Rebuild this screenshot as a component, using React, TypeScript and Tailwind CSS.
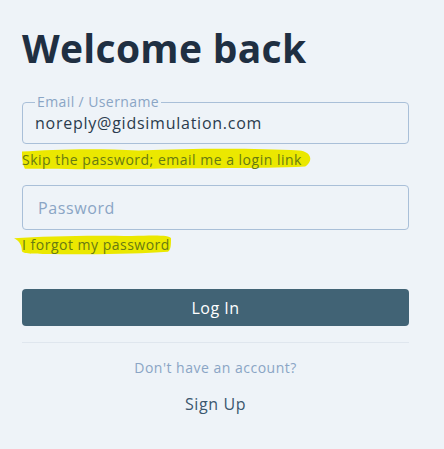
import React from 'react'

const font = { fontFamily: '"Open Sans", "Noto Sans", sans-serif' }

function Marker({ d, className }: { d: string; className: string }) {
  return (
    <svg className={className} viewBox="0 0 100 20" preserveAspectRatio="none" aria-hidden>
      <path d={d} fill="#ebe800" />
    </svg>
  )
}

export default function App() {
  return (
    <div className="min-h-[449px] w-full bg-[#eef3f8]" style={font}>
      <div className="w-[387px] ml-[22px] pt-[24px]">
        <h1 className="text-[39px] font-bold leading-[48px] tracking-[0.3px] text-[#1f2f42]">Welcome back</h1>

        <fieldset className="mt-[22px] h-[50px] rounded-[4px] border border-[#a9bfd8] px-[12px]">
          <legend className="px-[2px] text-[14px] leading-[16px] tracking-[0.4px] text-[#8aa5c5]">Email / Username</legend>
          <div className="mt-[1px] text-[16px] leading-[24px] tracking-[0.75px] text-[#2a3b4d]">noreply@gidsimulation.com</div>
        </fieldset>

        <div className="relative mt-[3px] h-[22px]">
          <Marker
            className="absolute left-0 top-0 h-[23px] w-[292px]"
            d="M0 4 C 10 2, 25 1, 40 3 C 60 1, 80 1, 95 3 C 99 4, 100 12, 97 17 C 80 19, 60 18, 45 19 C 25 20, 10 19, 1 19 C 0 14, 0 8, 0 4 Z"
          />
          <span className="relative text-[14px] leading-[22px] tracking-[0.5px] text-[#677a12]">
            Skip the password; email me a login link
          </span>
        </div>

        <div className="mt-[16px] flex h-[45px] items-center rounded-[4px] border border-[#a9bfd8] px-[15px] text-[16px] tracking-[0.6px] text-[#8aa5c5]">
          Password
        </div>

        <div className="relative mt-[2px] h-[22px]">
          <Marker
            className="absolute -left-[8px] top-[2px] h-[21px] w-[157px]"
            d="M0 4 C 20 2, 50 1, 75 2 C 90 1, 99 1, 100 4 C 100 10, 100 15, 98 17 C 80 19, 50 20, 25 19 C 12 19, 5 19, 5 16 C 5 10, 3 6, 0 4 Z"
          />
          <span className="relative text-[14px] leading-[22px] tracking-[0.5px] text-[#677a12]">I forgot my password</span>
        </div>

        <button className="mt-[35px] flex h-[37px] w-full items-center justify-center rounded-[4px] bg-[#416375] text-[16px] tracking-[0.5px] text-white">
          Log In
        </button>

        <div className="mt-[16px] border-t border-[#dfe6ee]" />

        <p className="mt-[15px] text-center text-[14px] leading-[20px] tracking-[0.5px] text-[#8aa5c5]">Don't have an account?</p>
        <p className="mt-[14px] text-center text-[16px] leading-[24px] tracking-[0.6px] text-[#3b576e]">Sign Up</p>
      </div>
    </div>
  )
}
